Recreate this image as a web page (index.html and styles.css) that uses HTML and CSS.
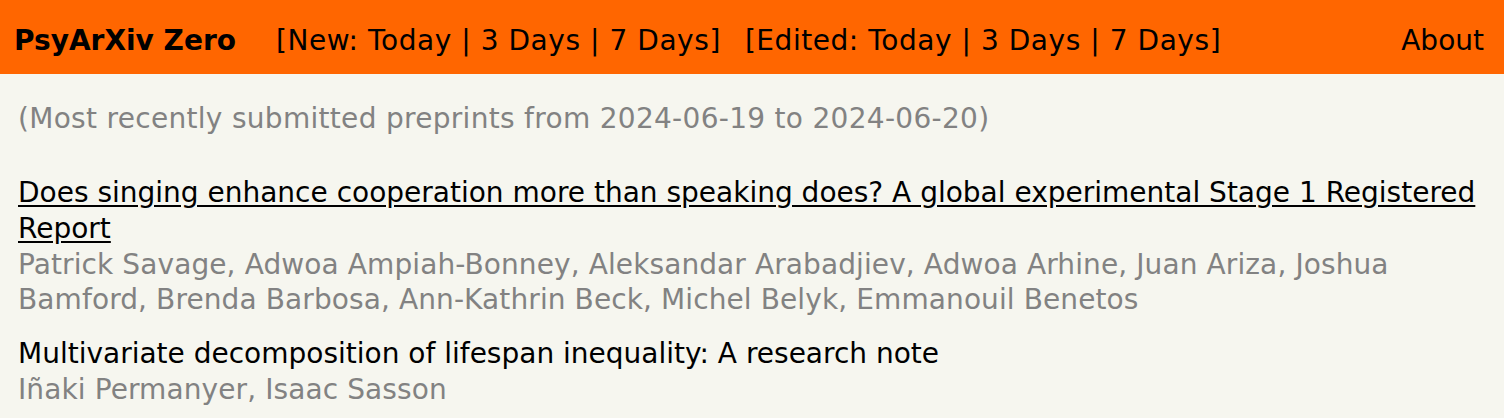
FILE: index.html
```html
<!DOCTYPE html>
<html>
<head>
<meta charset="utf-8">
<link rel="stylesheet" href="styles.css">
</head>
<body>
<header class="topbar">
  <div class="brand">PsyArXiv Zero</div>
  <nav class="filters">
    <span>[New: <a href="#">Today</a> | <a href="#">3 Days</a> | <a href="#">7 Days</a>]</span>
    <span>[Edited: <a href="#">Today</a> | <a href="#">3 Days</a> | <a href="#">7 Days</a>]</span>
  </nav>
  <a class="about" href="#">About</a>
</header>
<main class="content">
  <p class="range">(Most recently submitted preprints from 2024-06-19 to 2024-06-20)</p>
  <article class="item">
    <a class="title visited" href="#">Does singing enhance cooperation more than speaking does? A global experimental Stage 1 Registered Report</a>
    <div class="authors">Patrick Savage, Adwoa Ampiah-Bonney, Aleksandar Arabadjiev, Adwoa Arhine, Juan Ariza, Joshua Bamford, Brenda Barbosa, Ann-Kathrin Beck, Michel Belyk, Emmanouil Benetos</div>
  </article>
  <article class="item">
    <a class="title" href="#">Multivariate decomposition of lifespan inequality: A research note</a>
    <div class="authors">Iñaki Permanyer, Isaac Sasson</div>
  </article>
</main>
</body>
</html>
```
FILE: styles.css
```css
html, body {
  margin: 0;
  padding: 0;
}
body {
  background: #f6f6ef;
  font-family: "DejaVu Sans", Verdana, sans-serif;
  font-size: 28px;
  line-height: 35px;
  color: #000;
}
a {
  color: #000;
  text-decoration: none;
}
.topbar {
  background: #ff6600;
  height: 74px;
  display: flex;
  align-items: center;
  padding: 6px 20px 0 14px;
  box-sizing: border-box;
}
.brand {
  font-weight: bold;
  margin-right: 40px;
}
.filters {
  display: flex;
  gap: 24px;
  flex: 1;
  letter-spacing: 0.55px;
}
.content {
  padding: 27px 18px 0;
}
.range {
  margin: 0 0 39px;
  color: #828282;
  letter-spacing: 0.3px;
}
.item {
  margin-bottom: 19px;
}
.title {
  display: block;
  line-height: 36px;
}
.title.visited {
  text-decoration: underline;
  text-underline-offset: 3px;
}
.authors {
  color: #828282;
  letter-spacing: 0.1px;
}
```
